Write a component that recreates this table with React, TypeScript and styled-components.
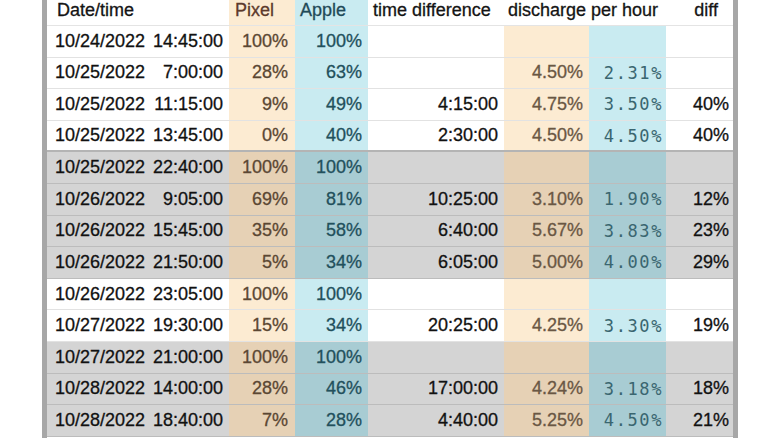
import React from 'react';
import styled, { createGlobalStyle, css } from 'styled-components';

const GlobalStyle = createGlobalStyle`
    html, body {
        margin: 0;
        padding: 0;
        background: #fff;
        overflow: hidden;
    }
    body {
        font-family: "Liberation Sans", Arial, sans-serif;
    }
`;

type Tone = 'plain' | 'pixel' | 'apple';

const COLUMNS = '182px 66px 73px 136px 85px 77px 67px';

const bg = {
    plain: { light: '#ffffff', shaded: '#d4d4d4' },
    pixel: { light: '#fcebd2', shaded: '#e6d1b5' },
    apple: { light: '#c9ebf1', shaded: '#a8ccd3' },
};

const Page = styled.div`
    height: 438px;
    padding: 0 42px;
    overflow: hidden;
`;

const Sheet = styled.div`
    width: 686px;
    border-left: 5px solid #a7a7a7;
    border-right: 5px solid #a7a7a7;
    min-height: 438px;
`;

const HeaderRow = styled.div`
    display: grid;
    grid-template-columns: ${COLUMNS};
    height: 26px;
    box-sizing: border-box;
    border-bottom: 1px solid #e4e4e4;
`;

const HeaderCell = styled.div<{ $tone?: Tone; $span?: number; $pad?: string; $color?: string; $align?: string }>`
    grid-column: span ${(p) => p.$span || 1};
    display: flex;
    align-items: flex-end;
    justify-content: ${(p) => p.$align || 'flex-start'};
    padding: ${(p) => p.$pad || '0 5px'};
    padding-bottom: 4px;
    box-sizing: border-box;
    font-size: 18px;
    line-height: 21px;
    -webkit-text-stroke: 0.3px currentColor;
    color: ${(p) => p.$color || '#141414'};
    background: ${(p) => bg[p.$tone || 'plain'].light};
    white-space: nowrap;
`;

const Row = styled.div<{ $shaded?: boolean; $thick?: boolean }>`
    display: grid;
    grid-template-columns: ${COLUMNS};
    height: 31.6px;
    box-sizing: border-box;
    border-bottom: 1px solid ${(p) => (p.$shaded ? '#bcbcbc' : '#e2e2e2')};
    ${(p) =>
        p.$thick &&
        css`
            border-bottom: 2px solid #b4b4b4;
        `}
`;

const Cell = styled.div<{ $tone?: Tone; $shaded?: boolean; $pad?: number; $color?: string; $mono?: boolean }>`
    display: flex;
    align-items: center;
    justify-content: flex-end;
    padding-right: ${(p) => (p.$pad ?? 6)}px;
    font-size: 18px;
    -webkit-text-stroke: 0.3px currentColor;
    color: ${(p) => p.$color || '#111'};
    background: ${(p) => bg[p.$tone || 'plain'][p.$shaded ? 'shaded' : 'light']};
    white-space: nowrap;
    ${(p) =>
        p.$mono &&
        css`
            font-family: "DejaVu Sans Mono", monospace;
            font-size: 17px;
            letter-spacing: 1.6px;
            -webkit-text-stroke: 0;
        `}
`;

const DateCell = styled(Cell)`
    justify-content: space-between;
    padding-left: 8px;
`;

interface Reading {
    date: string;
    time: string;
    pixel: string;
    apple: string;
    span?: string;
    pixelRate?: string;
    appleRate?: string;
    diff?: string;
    shaded?: boolean;
    thick?: boolean;
}

const readings: Reading[] = [
    { date: '10/24/2022', time: '14:45:00', pixel: '100%', apple: '100%' },
    { date: '10/25/2022', time: '7:00:00', pixel: '28%', apple: '63%', pixelRate: '4.50%', appleRate: '2.31%' },
    { date: '10/25/2022', time: '11:15:00', pixel: '9%', apple: '49%', span: '4:15:00', pixelRate: '4.75%', appleRate: '3.50%', diff: '40%' },
    { date: '10/25/2022', time: '13:45:00', pixel: '0%', apple: '40%', span: '2:30:00', pixelRate: '4.50%', appleRate: '4.50%', diff: '40%', thick: true },
    { date: '10/25/2022', time: '22:40:00', pixel: '100%', apple: '100%', shaded: true },
    { date: '10/26/2022', time: '9:05:00', pixel: '69%', apple: '81%', span: '10:25:00', pixelRate: '3.10%', appleRate: '1.90%', diff: '12%', shaded: true },
    { date: '10/26/2022', time: '15:45:00', pixel: '35%', apple: '58%', span: '6:40:00', pixelRate: '5.67%', appleRate: '3.83%', diff: '23%', shaded: true },
    { date: '10/26/2022', time: '21:50:00', pixel: '5%', apple: '34%', span: '6:05:00', pixelRate: '5.00%', appleRate: '4.00%', diff: '29%', shaded: true },
    { date: '10/26/2022', time: '23:05:00', pixel: '100%', apple: '100%' },
    { date: '10/27/2022', time: '19:30:00', pixel: '15%', apple: '34%', span: '20:25:00', pixelRate: '4.25%', appleRate: '3.30%', diff: '19%' },
    { date: '10/27/2022', time: '21:00:00', pixel: '100%', apple: '100%', shaded: true },
    { date: '10/28/2022', time: '14:00:00', pixel: '28%', apple: '46%', span: '17:00:00', pixelRate: '4.24%', appleRate: '3.18%', diff: '18%', shaded: true },
    { date: '10/28/2022', time: '18:40:00', pixel: '7%', apple: '28%', span: '4:40:00', pixelRate: '5.25%', appleRate: '4.50%', diff: '21%', shaded: true },
];

const App = () => {
    return (
        <Page>
            <GlobalStyle />
            <Sheet>
                <HeaderRow>
                    <HeaderCell $pad="0 0 0 10px">Date/time</HeaderCell>
                    <HeaderCell $tone="pixel" $pad="0 0 0 6px" $color="#5c3a2c">Pixel</HeaderCell>
                    <HeaderCell $tone="apple" $pad="0 0 0 5px" $color="#1f4a58">Apple</HeaderCell>
                    <HeaderCell $pad="0 0 0 5px">time difference</HeaderCell>
                    <HeaderCell $span={2} $pad="0 0 0 4px">discharge per hour</HeaderCell>
                    <HeaderCell $align="flex-end" $pad="0 15px 0 0">diff</HeaderCell>
                </HeaderRow>
                {readings.map((r, i) => (
                    <Row key={i} $shaded={r.shaded} $thick={r.thick}>
                        <DateCell $shaded={r.shaded}>
                            <span>{r.date}</span>
                            <span>{r.time}</span>
                        </DateCell>
                        <Cell $tone="pixel" $shaded={r.shaded} $pad={7} $color="#5b4733">{r.pixel}</Cell>
                        <Cell $tone="apple" $shaded={r.shaded} $pad={6} $color="#22505c">{r.apple}</Cell>
                        <Cell $shaded={r.shaded} $pad={6}>{r.span}</Cell>
                        <Cell $tone="pixel" $shaded={r.shaded} $pad={6} $color="#6a5744">{r.pixelRate}</Cell>
                        <Cell $tone="apple" $shaded={r.shaded} $pad={3} $color="#3a6670" $mono>{r.appleRate}</Cell>
                        <Cell $shaded={r.shaded} $pad={4}>{r.diff}</Cell>
                    </Row>
                ))}
            </Sheet>
        </Page>
    );
};

export default App;
